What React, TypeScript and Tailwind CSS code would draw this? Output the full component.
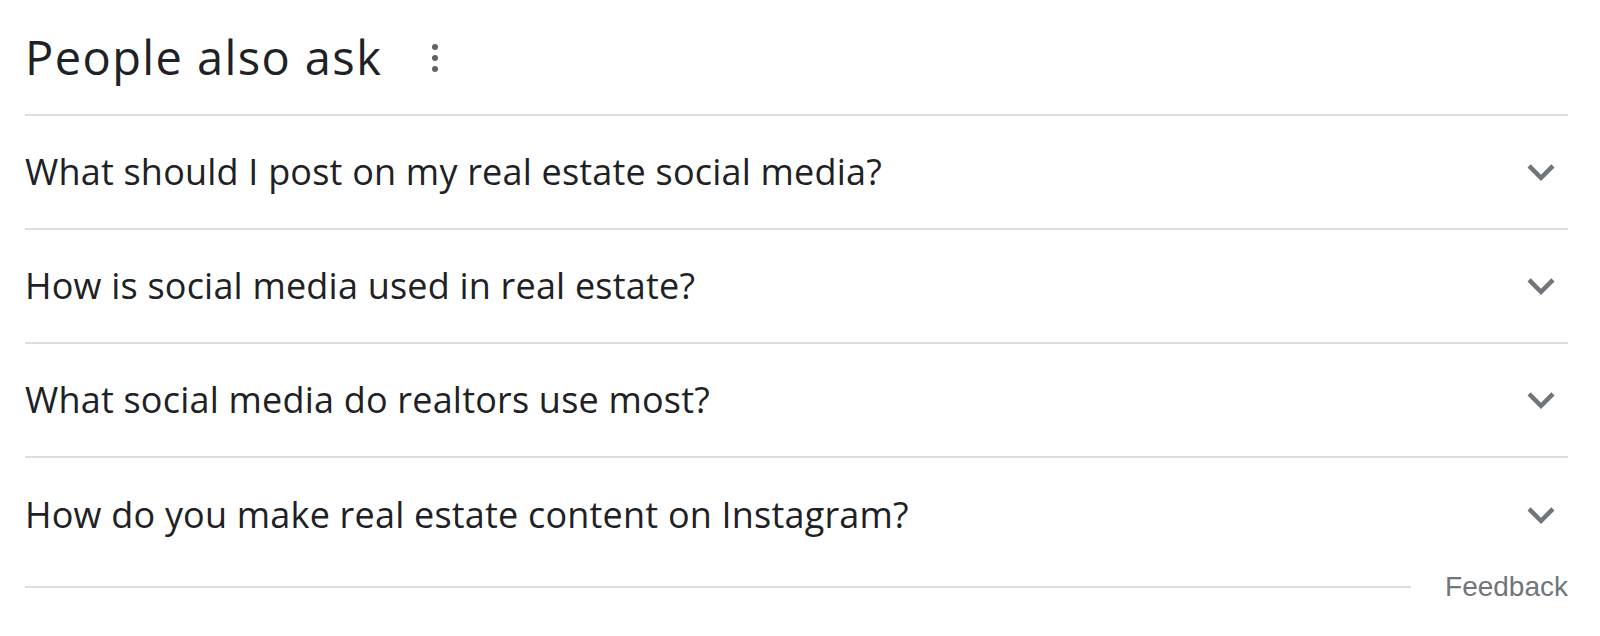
const questions = [
  'What should I post on my real estate social media?',
  'How is social media used in real estate?',
  'What social media do realtors use most?',
  'How do you make real estate content on Instagram?',
]

function Chevron() {
  return (
    <svg width="54" height="54" viewBox="0 0 24 24" fill="#70757a">
      <path d="M7.41 8.59L12 13.17l4.59-4.58L18 10l-6 6-6-6 1.41-1.41z" />
    </svg>
  )
}

export default function App() {
  return (
    <div className="min-h-[636px] w-[1600px] bg-white pl-[25px] pr-[32px] font-['Open_Sans',sans-serif] text-[#202124]">
      <div className="flex h-[116px] items-center gap-[50px] border-b-2 border-[#dadce0]">
        <h2 className="text-[47px] leading-none tracking-[1.4px]">People also ask</h2>
        <div className="flex flex-col gap-[5px] pt-[2px]">
          <span className="h-[6px] w-[6px] rounded-full bg-[#5f6368]" />
          <span className="h-[6px] w-[6px] rounded-full bg-[#5f6368]" />
          <span className="h-[6px] w-[6px] rounded-full bg-[#5f6368]" />
        </div>
      </div>

      {questions.map((q, i) => (
        <div
          key={q}
          className={`flex h-[114px] items-center justify-between ${i < questions.length - 1 ? 'border-b-2 border-[#dadce0]' : ''}`}
        >
          <span className="text-[36px] leading-none tracking-[0.2px]">{q}</span>
          <Chevron />
        </div>
      ))}

      <div className="-mt-[1px] flex items-center gap-[34px]">
        <div className="h-[2px] flex-1 bg-[#dadce0]" />
        <span className="font-['Liberation_Sans',Arial,sans-serif] text-[28px] leading-[32px] text-[#70757a]">Feedback</span>
      </div>
    </div>
  )
}
